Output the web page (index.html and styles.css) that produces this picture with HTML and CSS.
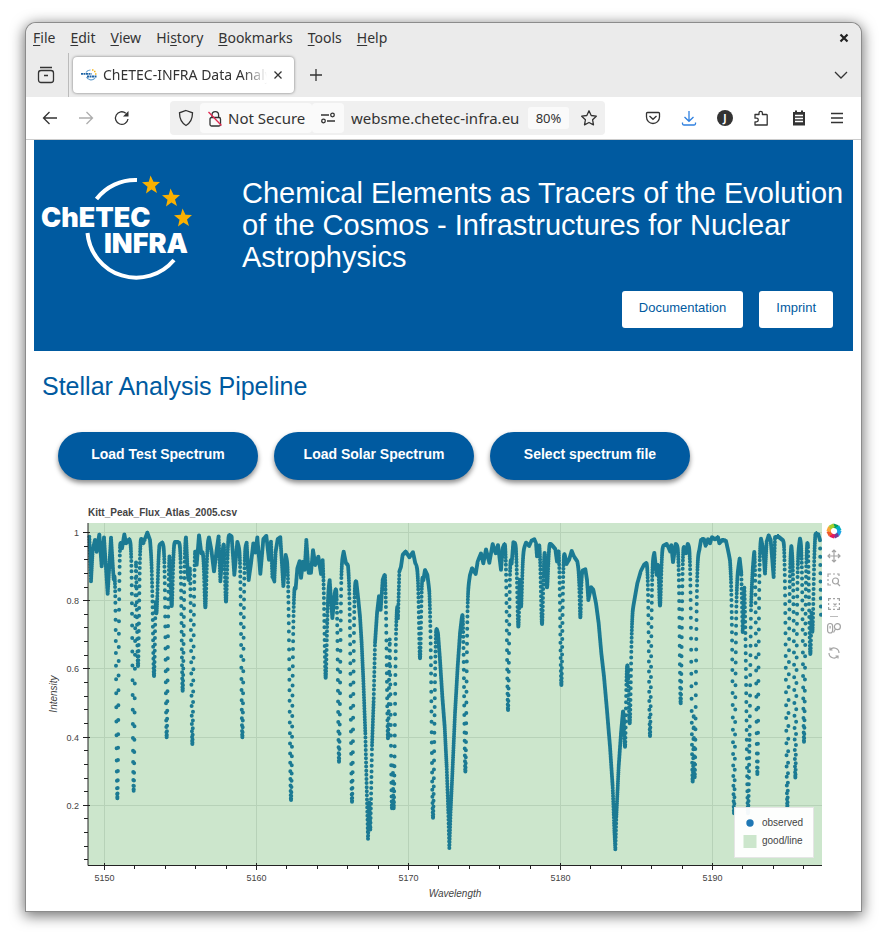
FILE: index.html
```html
<!DOCTYPE html>
<html lang="en">
<head>
<meta charset="utf-8">
<title>ChETEC-INFRA Data Analysis</title>
<link rel="stylesheet" href="styles.css">
</head>
<body>
<div class="window">
  <div class="chrome">
    <nav class="menubar" aria-label="Menu">
      <button><u>F</u>ile</button><button><u>E</u>dit</button><button><u>V</u>iew</button><button>Hi<u>s</u>tory</button><button><u>B</u>ookmarks</button><button><u>T</u>ools</button><button><u>H</u>elp</button>
      <button class="close" aria-label="Close window"><svg width="10" height="10" viewBox="0 0 10 10"><path d="M1.500 1.500l7 7M8.500 1.500l-7 7" stroke="#222" stroke-width="2.200"/></svg></button>
    </nav>
    <div class="tabs">
      <button class="recent" aria-label="Recent browsing"><svg class="ico" width="18" height="18" viewBox="0 0 18 18"><path d="M3 1.500h12"/><rect x="1.500" y="4.500" width="15" height="12" rx="2.500"/><path d="M7 9.500h4"/></svg></button>
      <div class="tab">
        <svg width="16" height="16" viewBox="0 0 16 16"><path d="M5 5.500a5 5 0 0 1 4.500-2.500M5.500 10a5 5 0 0 0 8.500 1" fill="none" stroke="#6ba2d0" stroke-width="1.200"/><path d="M0 6.800h10.500M6 9.500h9.500" stroke="#1d63a5" stroke-width="1.800" stroke-dasharray="2 .5"/><path d="M11 3h1.500M13 4.500h1.500M14 7h1.500" stroke="#f6b51c" stroke-width="1.500"/></svg>
        <span class="tab-title">ChETEC-INFRA Data Analysis</span>
        <button aria-label="Close tab"><svg class="ico" width="10" height="10" viewBox="0 0 10 10"><path d="M1.500 1.500l7 7M8.500 1.500l-7 7"/></svg></button>
      </div>
      <button class="tool new" aria-label="New tab"><svg class="ico" width="12" height="12" viewBox="0 0 12 12"><path d="M6 0v12M0 6h12"/></svg></button>
      <button class="tool last" aria-label="List all tabs"><svg class="ico" width="14" height="8" viewBox="0 0 14 8"><path d="M1 1l6 6 6-6"/></svg></button>
    </div>
    <div class="toolbar">
      <button class="tool" aria-label="Back"><svg class="ico" width="16" height="14" viewBox="0 0 16 14"><path d="M15 7H1.500M7.500 1l-6 6 6 6"/></svg></button>
      <button class="tool dim" aria-label="Forward"><svg class="ico" width="16" height="14" viewBox="0 0 16 14"><path d="M1 7h13.500M8.500 1l6 6-6 6"/></svg></button>
      <button class="tool" aria-label="Reload"><svg class="ico" width="16" height="16" viewBox="0 0 16 16"><path d="M14 9a6.300 6.300 0 1 1-2.200-5.800"/><path d="M14.500 1v5.500H9z" fill="#333" stroke="none"/></svg></button>
      <div class="urlbar">
        <button class="shield" aria-label="Tracking protection"><svg class="ico" width="16" height="18" viewBox="0 0 16 18"><path d="M8 1.500l6.500 2.300c0 6-1.800 10-6.500 12.700C3.300 13.800 1.500 9.800 1.500 3.800z"/></svg></button>
        <button class="identity"><svg class="ico" width="15" height="17" viewBox="0 0 15 17"><rect x="2" y="7.500" width="10.500" height="8.500" rx="1.500"/><path d="M4 7.500V5a3.300 3.300 0 0 1 6.600 0v2.500"/><path d="M.5 2l13 13.500" stroke="#e22850"/></svg>Not Secure</button>
        <button class="perms" aria-label="Permissions"><svg class="ico" width="16" height="12" viewBox="0 0 16 12"><path d="M1 3h8M7 9h8"/><circle cx="12.500" cy="3" r="1.800"/><circle cx="3.500" cy="9" r="1.800"/></svg></button>
        <input type="text" aria-label="Address" value="websme.chetec-infra.eu">
        <button class="zoom">80%</button>
        <button class="star" aria-label="Bookmark"><svg class="ico" width="18" height="18" viewBox="0 0 18 18"><path d="M9 1.800l2.200 4.700 5.100.7-3.700 3.600.9 5.100L9 13.500l-4.500 2.400.9-5.100L1.700 7.200l5.100-.7z" stroke-linejoin="round"/></svg></button>
      </div>
      <button class="tool" aria-label="Pocket"><svg class="ico" width="16" height="14" viewBox="0 0 16 14"><path d="M2.500 1.500h11a1 1 0 0 1 1 1V6a6.500 6.500 0 0 1-13 0V2.500a1 1 0 0 1 1-1z"/><path d="M4.500 5L8 8.300 11.500 5"/></svg></button>
      <button class="tool" aria-label="Downloads"><svg class="ico blue" width="16" height="16" viewBox="0 0 16 16"><path d="M8 1v10M3.500 7L8 11.300 12.500 7M1.500 12.500v1.300a1.500 1.500 0 0 0 1.500 1.200h10a1.500 1.500 0 0 0 1.500-1.200v-1.300"/></svg></button>
      <button class="tool" aria-label="Account"><span class="avatar">J</span></button>
      <button class="tool" aria-label="Extensions"><svg class="ico" width="16" height="16" viewBox="0 0 16 16"><path d="M2 4.500h4V3a1.700 1.700 0 0 1 3.400 0v1.500h4a.8.8 0 0 1 .8.800V15H2v-3.200h1.500a1.800 1.800 0 0 0 0-3.600H2z" stroke-linejoin="round"/></svg></button>
      <button class="tool notes" aria-label="Notes"><svg width="14" height="16" viewBox="0 0 14 16"><path d="M1 2h2V.5h2V2h4V.5h2V2h2v13.500H1z" fill="#333"/><path d="M3 5.500h8M3 8.500h8M3 11.500h8" stroke="#fff" stroke-width="1.300"/></svg></button>
      <button class="tool last" aria-label="Application menu"><svg class="ico" width="12" height="12" viewBox="0 0 12 12"><path d="M0 1.500h12M0 6h12M0 10.500h12"/></svg></button>
    </div>
  </div>

  <main class="page">
    <header class="banner">
      <svg class="logo" viewBox="0 0 154 104" role="img" aria-label="ChETEC INFRA">
        <g fill="none" stroke="#fff" stroke-width="4"><path d="M54.500 22A49 49 0 0 1 95 3"/><path d="M45.500 56A49 49 0 0 0 132 83"/></g>
        <g class="logo-type"><text x="-1" y="50">ChETEC</text><text x="62" y="76">INFRA</text></g>
        <g fill="#f9b000"><path id="s" d="M108.500-1.500l3 6.200 6.500.2-5 4.500 2 6.500-5.600-3.500-5.400 4 1.500-6.700-5.500-4.500 6.800-.5z"/><use href="#s" x="20" y="13"/><use href="#s" x="32" y="33"/></g>
      </svg>
      <h1>Chemical Elements as Tracers of the Evolution of the Cosmos - Infrastructures for Nuclear Astrophysics</h1>
      <nav class="links"><a href="#doc">Documentation</a><a href="#imprint">Imprint</a></nav>
    </header>
    <h2>Stellar Analysis Pipeline</h2>
    <div class="actions"><button>Load Test Spectrum</button><button>Load Solar Spectrum</button><button>Select spectrum file</button></div>
    <section class="figure" aria-label="Spectrum plot">
      <svg class="plot" viewBox="34 500 788 404">
        <rect x="88" y="523" width="734" height="342" fill="#cce6cc"/>
        <g id="grid" stroke="#b7d2b8"></g>
        <path id="dots" fill="none" stroke="#1b7a93" stroke-width="4" stroke-linecap="round"/>
        <g id="axes" stroke="#222"><path d="M88 523v342.500h734" fill="none"/></g>
        <text class="plot-title" x="88" y="516">Kitt_Peak_Flux_Atlas_2005.csv</text>
        <g id="labels" class="tick"></g>
        <text class="axis" x="455" y="897" text-anchor="middle">Wavelength</text>
        <text class="axis" transform="translate(57 694) rotate(-90)" text-anchor="middle">Intensity</text>
        <rect x="734.500" y="807.500" width="79" height="50" fill="#fff" fill-opacity=".95" stroke="#e5e5e5"/>
        <circle cx="750" cy="823" r="3.700" fill="#1f77b4"/><rect x="743.500" y="835" width="13" height="13" fill="#cce6cc"/>
        <g class="legend"><text x="762" y="826">observed</text><text x="762" y="844">good/line</text></g>
      </svg>
      <div class="plot-tools">
        <a href="#bokeh" aria-label="Bokeh"><svg width="16" height="16" viewBox="0 0 16 16" fill="none" stroke-width="4"><path d="M7 2.500l5 1.600" stroke="#009f60"/><path d="M11.500 3.500L13.700 8" stroke="#00aec7"/><path d="M13.700 7.500l-1.800 4.400" stroke="#1ba4e8"/><path d="M12.300 11.500L8 13.700" stroke="#793b99"/><path d="M8.500 13.700l-4.400-1.800" stroke="#e5195f"/><path d="M4.500 12.300L2.300 8" stroke="#f05a28"/><path d="M2.300 8.500l1.800-4.400" stroke="#fba536"/><path d="M3.700 4.500L8 2.300" stroke="#a5cf2b"/></svg></a>
        <button aria-label="Pan"><svg class="gray" width="14" height="14" viewBox="0 0 14 14"><path d="M7 1v12M1 7h12M5 3l2-2 2 2M5 11l2 2 2-2M3 5L1 7l2 2M11 5l2 2-2 2"/></svg></button>
        <button aria-label="Box zoom"><svg class="gray" width="14" height="14" viewBox="0 0 14 14"><path d="M1 4V1h3M6 1h2M10 1h2v2M1 6v2M1 10v2h3"/><circle cx="8.500" cy="8" r="3"/><path d="M10.500 10.500L13 13"/></svg></button>
        <button aria-label="Box select"><svg class="gray" width="14" height="14" viewBox="0 0 14 14"><path d="M1.600 4V1.600H4M6 1.600h2M10 1.600h2.400V4M1.600 6v2M1.600 10v2.400H4M6 12.400h2M12.400 6v2M10 12.400h2.400V10M6.500 6.500l3 3M9.500 6.500l-3 3"/></svg></button>
        <hr>
        <button aria-label="Wheel zoom"><svg class="gray" width="14" height="14" viewBox="0 0 14 14"><rect x=".6" y="1.500" width="5" height="9.500" rx="2.500"/><path d="M3.100 4v2.500"/><circle cx="10.400" cy="4.700" r="3"/><path d="M8.500 7L6.500 10.500"/></svg></button>
        <button aria-label="Reset"><svg class="gray" width="14" height="14" viewBox="0 0 14 14"><path d="M3 4a5 5 0 0 1 9 3M11 10a5 5 0 0 1-9-3M3 1.500V4h2.500M11 12.500V10H8.500"/></svg></button>
      </div>
    </section>
  </main>
</div>
<script src="plot.js"></script>
</body>
</html>
```
FILE: styles.css
```css
* { box-sizing: border-box; }
body { margin: 0; padding: 23px 26px 29px; background: #fff; font-family: "Liberation Sans", sans-serif; }
button { border: 0; padding: 0; margin: 0; background: none; font: inherit; color: inherit; }
svg { display: block; flex: none; }
.window { border-radius: 10px 10px 0 0; background: #fff; box-shadow: 0 0 0 1px #8c8c8c, 0 3px 14px 2px rgba(0,0,0,.55); overflow: clip; overflow-clip-margin: 30px; }
.chrome { font: 15px/20px "Noto Sans", sans-serif; color: #333; border-bottom: 1px solid #ccc; }
.ico { fill: none; stroke: #333; stroke-width: 1.3px; }
.ico.blue { stroke: #2f80e0; }
.menubar { display: flex; align-items: center; gap: 15px; height: 30px; padding: 0 12px 0 7px; background: #ebebeb; border-radius: 10px 10px 0 0; font-size: 14px; }
.menubar u { text-underline-offset: 2px; }
.close { margin-left: auto; }
.tabs { display: flex; align-items: center; height: 44px; padding-right: 6px; background: #ebebeb; }
.recent { align-self: stretch; width: 43px; padding-left: 11px; border-right: 1px solid #bbb; }
.tab { display: flex; align-items: center; gap: 6px; width: 221px; height: 36px; margin-left: 4px; padding: 0 11px 0 8px; border-radius: 4px; background: #fff; box-shadow: 0 0 3px rgba(0,0,0,.5); font-size: 14px; }
.tab-title { flex: 1; overflow: hidden; white-space: nowrap; mask-image: linear-gradient(to left, transparent, #000 24px); }
.tool { display: flex; align-items: center; justify-content: center; width: 36px; height: 36px; flex: none; }
.new { margin-left: 4px; }
.tabs .last { margin-left: auto; width: 28px; }
.toolbar { display: flex; align-items: center; height: 42px; padding: 0 6px; background: #fff; }
.toolbar .notes { width: 40px; }
.dim { opacity: .4; }
.urlbar { display: flex; align-items: center; flex: 1; min-width: 0; height: 34px; margin: 0 30px; border-radius: 4px; background: #f0f0f0; font-size: 15px; }
.shield { width: 30px; padding-left: 8px; }
.identity { display: flex; align-items: center; gap: 5px; width: 112px; height: 30px; padding-left: 8px; background: #fafafa; border-radius: 4px; white-space: nowrap; }
.perms { width: 32px; height: 30px; padding-left: 8px; background: #fafafa; border-radius: 4px; }
.urlbar input { flex: 1; min-width: 0; border: 0; padding: 0 0 0 7px; background: none; font: inherit; color: inherit; }
.zoom { width: 41px; height: 22px; border-radius: 3px; background: #fafafa; font-size: 13px; line-height: 20px; }
.star { width: 36px; padding-left: 11px; }
.avatar { width: 16px; height: 16px; border-radius: 50%; background: #333; color: #fff; font: bold 10px/16px "Noto Sans", sans-serif; }
.page { padding: 0 8px 7px; }
.banner { display: grid; grid-template-columns: 154px 1fr; column-gap: 46px; padding: 37px 8px 23px; background: #005aa0; color: #fff; }
.logo { width: 154px; height: 104px; overflow: visible; }
.logo-type { font: 900 27px Inter, sans-serif; fill: #fff; }
h1 { margin: 0; font-size: 29px; line-height: 32px; font-weight: 400; }
.links { grid-column: 1 / -1; display: flex; justify-content: flex-end; gap: 16px; margin: 10px 12px 0 0; }
.links a { padding: 9px 17px 12px; border-radius: 3px; background: #fff; color: #005aa0; font-size: 13px; line-height: 16px; text-decoration: none; }
h2 { margin: 19px 8px 0; color: #005aa0; font-size: 25px; line-height: 32px; font-weight: 400; }
.actions { display: flex; gap: 16px; padding: 30px 24px 20px; }
.actions button { width: 200px; height: 48px; padding-bottom: 4px; border-radius: 24px; background: #005aa0; color: #fff; font-size: 14px; font-weight: 700; box-shadow: 0 3px 5px rgba(0,0,0,.45); }
.figure { display: flex; align-items: flex-start; padding-right: 8px; }
.plot { flex: 1; min-width: 0; }
.plot-title { font-size: 10px; font-weight: 700; fill: #444; }
.tick { font-size: 9px; fill: #444; }
.axis { font-size: 10px; font-style: italic; fill: #444; }
.legend { font-size: 10px; fill: #444; }
.plot-tools { display: flex; flex-direction: column; align-items: center; gap: 10px; width: 23px; padding-top: 23px; }
.plot-tools hr { width: 8px; margin: -5px 0; border: 0; border-top: 1px solid #bbb; }
.gray { fill: none; stroke: #a3a3a3; stroke-width: 1.2px; }
```
FILE: plot.js
```js
// Spectrum shape in thirds of a plot unit. Each section has its own x origin:
// "level" traces the upper outline, "lines" holds [centre, bottom, width] of absorption lines.
const sections = [
  { x: 40, level: [148,110,153,245,158,150,165,120,170,155,178,103,185,200,192,112,203,283,213,112,221,238,226,190,234,200,240,115,246,145,253,103,258,130,268,118,274,130,284,160,288,125,302,110,310,130,322,98,330,120,336,190,352,200,358,135,367,128,373,140,380,160,387,155,402,125,420,128,428,140,438,108,443,170,452,170,460,180,465,135,470,195,477,105,484,160,489,150,499,130,507,112,514,150,522,215,530,150,536,108,541,245,547,165,552,108,566,103,575,110,583,225,592,125,598,145],
    lines: [[232,895],[281,872],[294,498],[342,528],[349,340],[380,712],[395,318],[428,572],[446,240],[457,732],[496,322],[558,305],[607,712]] },
  { x: 240, level: [12,150,20,128,26,240,33,190,40,130,46,158,52,112,61,222,70,118,79,108,87,180,93,125,97,230,103,245,107,155,113,118,121,112,130,260,137,165,143,185,148,230,158,250,163,250,167,265,172,205,179,183,183,235,189,185,194,210,199,120,206,218,213,218,219,150,226,195,235,170,243,222,248,175,254,250,262,290,269,240,277,355,285,275,290,252,301,250,304,190,311,155,318,190,324,195,329,240,344,232,349,245,355,300,360,350,365,430,370,540,376,700,380,860,384,1018,388,905,391,992,393,900,396,740,401,600,405,430,411,340,417,288,422,330,428,240,435,220,440,300,448,310,452,340,472,315,474,355,478,215,483,200,488,165,497,155,508,172,519,157,526,190,533,205,545,200,550,240,555,210,562,225,568,270,572,350,577,440,584,430,588,375,594,400,600,480,607,590,614,680,620,800,625,940,628,1045,632,930,638,800,645,640,653,500,660,400,668,330,673,360],
    lines: [[153,900,5.5],[257,533],[297,785],[336,905,5],[444,715],[456,925,5],[461,925,5],[540,475],[579,953,5],[676,815]] },
  { x: 430, level: [110,300,114,265,120,225,126,205,137,222,143,185,153,160,160,190,168,148,178,188,188,132,197,160,204,135,213,210,218,145,225,128,232,145,240,150,245,190,250,127,258,130,265,150,280,150,288,128,298,138,305,122,313,118,318,130,321,170,328,128,334,150,344,150,351,150,358,128,368,138,376,148,381,185,386,140,394,160,402,152,410,192,417,180,425,153,432,170,442,185,447,215,457,212,466,208,471,240,475,300,483,262,490,270,498,310,506,370,514,460,522,530,530,620,540,740,548,860,553,990,556,1050,559,950,566,800,573,700,579,632,584,632,589,520,594,456,599,450,604,370,608,330,615,290,622,250,632,215,642,195,650,188,656,200],
    lines: [[234,630],[265,380],[273,320],[336,372],[351,262],[394,555],[451,352,3],[585,740,3],[599,670],[660,708]] },
  { x: 640, level: [35,190,43,158,50,225,55,160,65,140,80,132,90,155,94,135,99,187,107,132,115,140,130,132,138,160,143,132,150,140,172,170,178,150,183,120,192,118,197,138,204,118,210,130,216,112,225,118,234,112,238,130,247,120,258,123,264,150,270,180,275,240,291,230,299,175,304,220,308,400,313,255,318,400,329,560,333,300,338,210,343,145,349,180,357,150,363,115,370,150,375,222,380,125,386,106,392,120,401,233,405,112,415,110,425,118,432,123,437,190,447,180,454,135,460,190,471,180,480,115,486,140,498,150,504,112,508,200,521,150,526,100,535,103,540,120,543,360],
    lines: [[60,317],[122,610],[158,845,5],[164,832,5],[282,940,5],[324,940,5],[352,823],[442,920,5],[466,833],[492,725],[511,462],[517,395]] }
];

const level = [], lines = [];
for (const s of sections) {
  for (let i = 0; i < s.level.length; i += 2) level.push([s.level[i] + 3 * s.x, s.level[i + 1]]);
  for (const [c, bottom, w = 4.4] of s.lines) lines.push([c + 3 * s.x, bottom, w]);
}

let d = "", k = 0;
for (let x = level[0][0]; x <= level[level.length - 1][0]; x += 0.31) {
  while (k < level.length - 2 && x > level[k + 1][0]) k++;
  const [x0, y0] = level[k], [x1, y1] = level[k + 1];
  const base = y0 + (y1 - y0) * (x - x0) / (x1 - x0);
  let y = base;
  for (const [c, bottom, w] of lines) {
    if (Math.abs(x - c) < 4 * w) y = Math.max(y, base + (bottom - base) * Math.exp(-(((x - c) / w) ** 2)));
  }
  d += `M${(x / 3).toFixed(2)} ${(500 + y / 3).toFixed(2)}h0`;
}
document.getElementById("dots").setAttribute("d", d);

let grid = "", ticks = "", labels = "";
for (let n = 0; n < 5; n++) {
  const x = 104.5 + 152 * n, y = Math.round(532 + 68.2 * n) + 0.5;
  grid += `<path d="M${x} 523V865M88 ${y}H822"/>`;
  ticks += `<path d="M${x} 863v7M83 ${y}h7"/>`;
  labels += `<text x="${x}" y="881" text-anchor="middle">${5150 + 10 * n}</text>`;
  labels += `<text x="79" y="${y + 3}" text-anchor="end">${n ? (1 - 0.2 * n).toFixed(1) : 1}</text>`;
}
for (let n = 1; n < 24; n++) if (n % 5) ticks += `<path d="M${Math.round(104 + 30.4 * n) + 0.5} 866v3"/>`;
for (let n = 1; n < 25; n++) if (n % 5) ticks += `<path d="M84 ${Math.round(532 + 13.64 * n) + 0.5}h4"/>`;
document.getElementById("grid").innerHTML = grid;
document.getElementById("axes").innerHTML += ticks;
document.getElementById("labels").innerHTML = labels;
```
